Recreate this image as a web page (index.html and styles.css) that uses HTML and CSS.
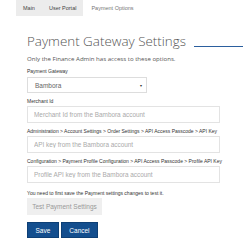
FILE: index.html
```html
<!DOCTYPE html>
<html lang="en">
<head>
    <meta charset="UTF-8">
    <title>Payment Options</title>
    <link rel="stylesheet" href="styles.css">
</head>
<body>

    <div class="tabs">
        <a class="tab">Main</a>
        <a class="tab">User Portal</a>
        <a class="tab active">Payment Options</a>
    </div>

    <div class="content">
        <div class="title-row">
            <h2>Payment Gateway Settings</h2>
            <span class="title-line"></span>
        </div>
        <p class="intro">Only the Finance Admin has access to these options.</p>

        <label>Payment Gateway</label>
        <div class="select">
            <span>Bambora</span>
            <span class="caret">&#9662;</span>
        </div>

        <label>Merchant Id</label>
        <input type="text" placeholder="Merchant Id from the Bambora account">

        <label>Administration &gt; Account Settings &gt; Order Settings &gt; API Access Passcode &gt; API Key</label>
        <input type="text" placeholder="API key from the Bambora account">

        <label>Configuration &gt; Payment Profile Configuration &gt; API Access Passcode &gt; Profile API Key</label>
        <input type="text" placeholder="Profile API key from the Bambora account">

        <p class="note">You need to first save the Payment settings changes to test it.</p>
        <button class="test" disabled>Test Payment Settings</button>

        <div class="actions">
            <button class="primary">Save</button>
            <button class="primary">Cancel</button>
        </div>
    </div>

</body>
</html>
```

FILE: styles.css
```css
body {
    margin: 0;
    background-color: #fff;
    font-family: 'Liberation Sans', Arial, sans-serif;
    color: #333;
}
.tabs {
    display: flex;
    padding-left: 16px;
    height: 16px;
}
.tab {
    display: flex;
    align-items: center;
    padding: 0 7px;
    font-size: 5.5px;
    color: #444;
    background-color: #ececec;
}
.tab.active {
    background-color: #fff;
    color: #777;
    padding: 0 8px;
}
.content {
    padding-left: 27px;
}
.title-row {
    display: flex;
    align-items: flex-end;
    margin-top: 17px;
    height: 16px;
}
h2 {
    margin: 0;
    font-family: 'Open Sans', sans-serif;
    font-weight: 300;
    font-size: 13.4px;
    line-height: 16px;
    color: #555;
    white-space: nowrap;
}
.title-line {
    flex: 1;
    height: 1px;
    margin-left: 8px;
    margin-bottom: 2px;
    background-color: #2b5f9e;
}
.intro {
    margin: 5px 0 0;
    font-family: 'Open Sans', sans-serif;
    font-size: 6.1px;
    line-height: 9px;
    color: #555;
}
label {
    display: block;
    font-size: 5px;
    line-height: 8px;
    color: #333;
    margin-top: 4px;
    white-space: nowrap;
}
.select {
    width: 120px;
    height: 16px;
    box-sizing: border-box;
    border: 1px solid #ddd;
    display: flex;
    align-items: center;
    justify-content: space-between;
    padding: 0 4px 0 7px;
    font-size: 6.5px;
    color: #666;
    margin-top: 2px;
}
.caret {
    font-size: 4px;
    color: #333;
}
input {
    display: block;
    width: 193px;
    height: 17px;
    box-sizing: border-box;
    border: 1px solid #e3e3e3;
    padding: 0 6px;
    margin-top: 1px;
    font-family: 'Liberation Sans', Arial, sans-serif;
    font-size: 6.4px;
    color: #333;
}
input::placeholder {
    color: #aaa;
}
.note {
    margin: 6px 0 0;
    font-size: 5px;
    line-height: 8px;
    color: #333;
}
button {
    font-family: 'Liberation Sans', Arial, sans-serif;
    border: none;
    cursor: pointer;
    white-space: nowrap;
}
button.test {
    display: block;
    width: 75px;
    height: 17px;
    padding: 0;
    margin-top: 1px;
    background-color: #efefef;
    color: #999;
    font-size: 6.5px;
}
.actions {
    display: flex;
    gap: 2px;
    margin-top: 7px;
}
button.primary {
    height: 16px;
    padding: 0 7.5px;
    background-color: #134e8e;
    color: #fff;
    font-size: 6.5px;
    border: 1px solid #0d3f75;
}
```
